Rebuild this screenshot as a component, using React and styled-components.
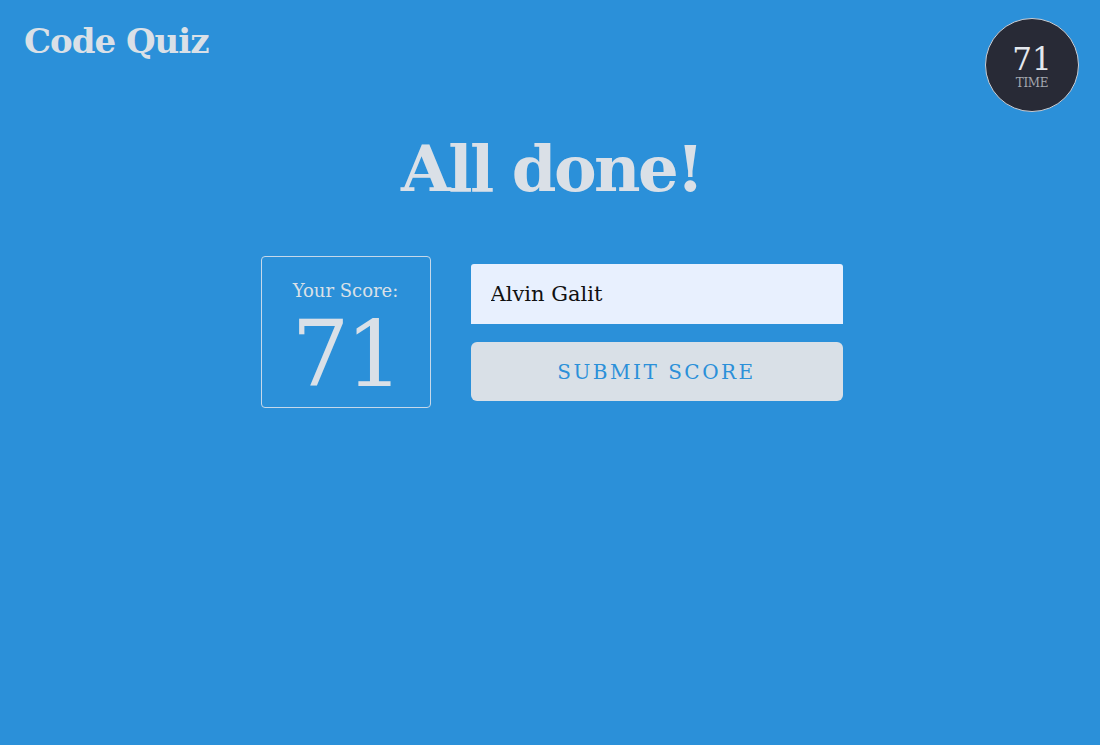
import React from 'react';
import styled, { createGlobalStyle } from 'styled-components';

const GlobalStyle = createGlobalStyle`
  html, body {
    margin: 0;
    padding: 0;
    height: 100%;
    background: #2b90d9;
  }
  body {
    font-family: "DejaVu Serif", "Liberation Serif", serif;
    color: #dae0e7;
  }
`;

const Page = styled.div`
  min-height: 745px;
  background: #2b90d9;
  padding: 18px 21px 0 24px;
  box-sizing: border-box;
`;

const Header = styled.header`
  display: flex;
  justify-content: space-between;
  align-items: flex-start;
`;

const Logo = styled.h1`
  margin: 0;
  font-size: 34px;
  font-weight: 700;
  line-height: 46px;
  letter-spacing: -1px;
`;

const Timer = styled.div`
  width: 92px;
  height: 92px;
  border-radius: 50%;
  background: #282a36;
  border: 1px solid #c9ced6;
  display: flex;
  flex-direction: column;
  align-items: center;
  justify-content: center;
  box-sizing: content-box;
`;

const TimerValue = styled.span`
  font-size: 31px;
  line-height: 32px;
  color: #e4e8ee;
  margin-top: 4px;
`;

const TimerLabel = styled.span`
  font-size: 12px;
  line-height: 16px;
  color: #a4a8b0;
  letter-spacing: -0.3px;
`;

const Main = styled.main`
  display: flex;
  flex-direction: column;
  align-items: center;
  margin-top: -2px;
`;

const Heading = styled.h2`
  margin: 14px 0 42px;
  font-size: 64px;
  font-weight: 700;
  line-height: 90px;
  letter-spacing: -2.5px;
`;

const Row = styled.div`
  display: flex;
  align-items: flex-start;
  gap: 40px;
`;

const ScoreBox = styled.div`
  width: 168px;
  height: 127px;
  border: 1px solid #c6d8ea;
  border-radius: 4px;
  display: flex;
  flex-direction: column;
  align-items: center;
  padding-top: 23px;
  box-sizing: content-box;
`;

const ScoreLabel = styled.div`
  font-size: 18px;
  line-height: 22px;
`;

const ScoreValue = styled.div`
  font-size: 91px;
  line-height: normal;
  letter-spacing: -4px;
`;

const Form = styled.form`
  display: flex;
  flex-direction: column;
  gap: 18px;
  padding-top: 8px;
  width: 372px;
`;

const NameInput = styled.input`
  height: 60px;
  border: none;
  border-radius: 3px 3px 0 0;
  background: #e8f0fe;
  padding: 0 20px;
  font-family: "DejaVu Serif", "Liberation Serif", serif;
  font-size: 21px;
  color: #111;
  outline: none;
  box-sizing: border-box;
`;

const SubmitButton = styled.button`
  height: 59px;
  border: none;
  border-radius: 6px;
  background: #d9e0e7;
  color: #2b90d9;
  font-family: "DejaVu Serif", "Liberation Serif", serif;
  font-size: 20px;
  letter-spacing: 2.5px;
  text-transform: uppercase;
  cursor: pointer;
`;

export default function App() {
  return (
    <Page>
      <GlobalStyle />
      <Header>
        <Logo>Code Quiz</Logo>
        <Timer>
          <TimerValue>71</TimerValue>
          <TimerLabel>TIME</TimerLabel>
        </Timer>
      </Header>
      <Main>
        <Heading>All done!</Heading>
        <Row>
          <ScoreBox>
            <ScoreLabel>Your Score:</ScoreLabel>
            <ScoreValue>71</ScoreValue>
          </ScoreBox>
          <Form onSubmit={(e) => e.preventDefault()}>
            <NameInput defaultValue="Alvin Galit" />
            <SubmitButton type="submit">Submit Score</SubmitButton>
          </Form>
        </Row>
      </Main>
    </Page>
  );
}
